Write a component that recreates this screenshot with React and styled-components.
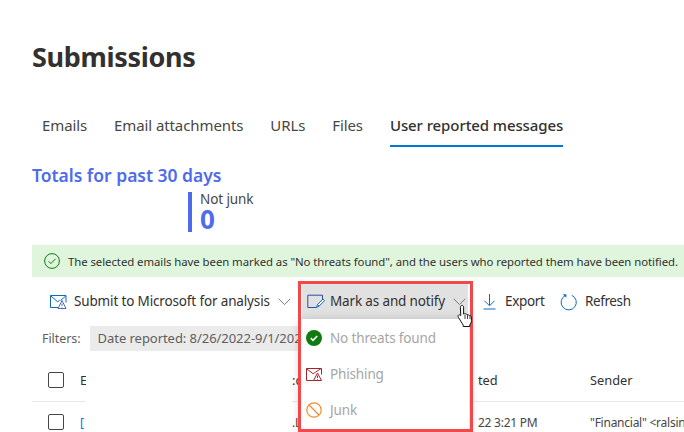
import React from "react";
import styled, { createGlobalStyle } from "styled-components";

const Global = createGlobalStyle`
  html, body { margin: 0; padding: 0; background: #fff; }
  body { width: 684px; height: 432px; overflow: hidden; font-family: "Noto Sans", "Open Sans", sans-serif; color: #323130; }
`;

const Page = styled.div`
  position: relative;
  width: 684px;
  height: 432px;
  overflow: hidden;
  padding-left: 32px;
  box-sizing: border-box;
`;
const Title = styled.h1`
  margin: 0;
  padding-top: 37px;
  height: 39px;
  font-size: 27px;
  line-height: 39px;
  font-weight: 700;
  letter-spacing: -0.33px;
  color: #323130;
`;
const Tabs = styled.nav`
  display: flex;
  gap: 27px;
  margin-top: 32px;
  padding-left: 10px;
  height: 39px;
`;
const Tab = styled.div`
  height: 39px;
  box-sizing: border-box;
  font-size: 15px;
  line-height: 35px;
  letter-spacing: -0.1px;
  white-space: nowrap;
  color: ${(p) => (p.$active ? "#323130" : "#484644")};
  font-weight: ${(p) => (p.$active ? 500 : 400)};
  border-bottom: ${(p) => (p.$active ? "2px solid #0078d4" : "2px solid transparent")};
`;
const Totals = styled.h2`
  margin: 17px 0 0;
  height: 22px;
  font-size: 17.5px;
  line-height: 22px;
  font-weight: 600;
  letter-spacing: -0.02px;
  color: #4f6bed;
`;
const Metric = styled.div`
  margin: 6px 0 0 156px;
  height: 40px;
  border-left: 4px solid #4f6bed;
  padding-left: 8px;
`;
const MetricLabel = styled.div`
  font-size: 13.5px;
  line-height: 14px;
  color: #484644;
  letter-spacing: -0.1px;
`;
const MetricValue = styled.div`
  font-size: 26px;
  line-height: 26px;
  font-weight: 700;
  color: #4f6bed;
`;
const Banner = styled.div`
  margin-top: 13px;
  height: 32px;
  background: #dff6dd;
  display: flex;
  align-items: center;
  padding-left: 12px;
  gap: 8px;
  font-size: 11.4px;
  letter-spacing: -0.07px;
  white-space: nowrap;
  color: #323130;
`;
const Toolbar = styled.div`
  display: flex;
  align-items: center;
  height: 35px;
  margin-top: 7px;
  padding-left: 18px;
  font-size: 13.5px;
`;
const ToolButton = styled.div`
  display: flex;
  align-items: center;
  height: 35px;
  flex: none;
  white-space: nowrap;
  box-sizing: border-box;
  width: ${(p) => p.$w}px;
  margin-left: ${(p) => p.$ml || 0}px;
  gap: ${(p) => p.$gap || 8}px;
  padding-left: ${(p) => p.$pl || 0}px;
  letter-spacing: ${(p) => p.$ls || "-0.15px"};
  background: ${(p) => (p.$on ? "#e1e1e1" : "transparent")};
`;
const ToolLabel = styled.span`
  margin-top: -2px;
`;
const Chevron = styled.svg`
  flex: none;
`;
const FilterRow = styled.div`
  display: flex;
  align-items: center;
  height: 25px;
  margin-top: 7px;
  padding-left: 10px;
  gap: 9px;
  font-size: 12.5px;
  letter-spacing: -0.05px;
  color: #605e5c;
`;
const Chip = styled.div`
  height: 25px;
  width: 208px;
  flex: none;
  background: #ebebeb;
  padding-left: 8px;
  box-sizing: border-box;
  line-height: 24px;
  font-size: 13px;
  white-space: nowrap;
  overflow: hidden;
`;
const Row = styled.div`
  display: grid;
  grid-template-columns: 32px 212px 186px 112px 1fr;
  align-items: center;
  height: ${(p) => p.$h}px;
  box-sizing: border-box;
  padding: ${(p) => p.$pt || 0}px 0 0 16px;
  font-size: ${(p) => (p.$head ? "12.8px" : "12px")};
  letter-spacing: ${(p) => (p.$head ? "0" : "-0.25px")};
  white-space: nowrap;
  overflow: hidden;
  border-bottom: ${(p) => (p.$line ? "1px solid #e8e8e8" : "none")};
  color: ${(p) => (p.$head ? "#323130" : "#484644")};
  font-weight: 400;
`;
const Check = styled.div`
  width: 14px;
  height: 14px;
  border: 1px solid #484644;
  border-radius: 2px;
`;
const LinkCell = styled.span`
  color: #0078d4;
`;
const Mask = styled.div`
  position: absolute;
  left: 86px;
  top: 352px;
  width: 206px;
  height: 80px;
  background: #fff;
`;
const Menu = styled.div`
  position: absolute;
  left: 301px;
  top: 319px;
  width: 168px;
  height: 113px;
  background: #fff;
  box-shadow: 0 2px 10px rgba(0, 0, 0, 0.22);
  padding-top: 1px;
  box-sizing: border-box;
`;
const MenuItem = styled.div`
  display: flex;
  align-items: center;
  height: 36px;
  padding-left: 5px;
  gap: 8px;
  font-size: 13.5px;
  letter-spacing: -0.15px;
  color: #a6a6a6;
`;
const Highlight = styled.div`
  position: absolute;
  left: 298px;
  top: 281px;
  width: 175px;
  height: 151px;
  box-sizing: border-box;
  border: 3px solid #f44749;
  pointer-events: none;
`;
const Cursor = styled.svg`
  position: absolute;
  left: 457px;
  top: 304px;
`;

const ChevronIcon = () => (
  <Chevron width="13" height="8" viewBox="0 0 13 8" fill="none">
    <path d="M.7.8l5.8 5.8L12.3.8" stroke="#7a7876" strokeWidth="1" />
  </Chevron>
);

const Mail = () => (
  <svg width="17" height="14" viewBox="0 0 17 14" fill="none" style={{ flex: "none", marginRight: "-1px" }}>
    <path d="M9 12.5H.5V.5h15.5v7" stroke="#0f6cbd" />
    <path d="M.7.8l7 6 2-1.6" stroke="#0f6cbd" />
    <path d="M16 .8L10.5 5.5" stroke="#0f6cbd" />
    <path d="M12 5.5l-4 8h8z" stroke="#4a6fb5" fill="#fff" />
    <path d="M12 8.5v2.5M12 12v.6" stroke="#4a6fb5" />
  </svg>
);
const Note = () => (
  <svg width="18" height="16" viewBox="0 0 18 16" fill="none" style={{ flex: "none", marginRight: "-3px" }}>
    <path d="M9.5 13.5H.8V1.2h14.7V5" stroke="#2b4f9e" />
    <path d="M9.5 13.5l1-3 5.5-5.5 1.6 1.6-5.5 5.5z" stroke="#0f6cbd" fill="#fff" />
    <path d="M10.5 10.5l1.6 1.6" stroke="#0f6cbd" />
  </svg>
);
const Down = () => (
  <svg width="13" height="16" viewBox="0 0 13 16" fill="none" style={{ flex: "none" }}>
    <path d="M6.5 0v11.5M1.5 6.8l5 5 5-5" stroke="#0f6cbd" />
    <path d="M0.5 15h12" stroke="#0f6cbd" />
  </svg>
);
const Refresh = () => (
  <svg width="18" height="18" viewBox="0 0 18 18" fill="none" style={{ flex: "none" }}>
    <path d="M11.7 2.3a7.6 7.6 0 1 1-6.4.2" stroke="#0f6cbd" strokeWidth="1" />
    <path d="M2.8 1.2h3.6v3.6z" fill="#0f6cbd" />
  </svg>
);
const OkRing = () => (
  <svg width="16" height="16" viewBox="0 0 16 16" fill="none" style={{ flex: "none" }}>
    <circle cx="8" cy="8" r="7.4" stroke="#107c10" />
    <path d="M4.6 8.3l2.3 2.3 4.6-4.8" stroke="#107c10" />
  </svg>
);
const OkFilled = () => (
  <svg width="16" height="16" viewBox="0 0 16 16" style={{ flex: "none" }}>
    <circle cx="8" cy="8" r="8" fill="#107c10" />
    <path d="M4.8 8.2l2.2 2.1 4.2-4.3" fill="none" stroke="#fff" strokeWidth="1.6" />
  </svg>
);
const Phish = () => (
  <svg width="16" height="13" viewBox="0 0 16 13" fill="none" style={{ flex: "none" }}>
    <path d="M8 12.5H.5V.5h15v6" stroke="#a4262c" />
    <path d="M.7.8l6.5 5 2-1.5 6-3.8" stroke="#a4262c" />
    <path d="M11.5 5l-4 7.5h8z" stroke="#a4262c" fill="#fff" />
    <path d="M11.5 7.5v2.5M11.5 11v.6" stroke="#a4262c" />
  </svg>
);
const Ban = () => (
  <svg width="16" height="16" viewBox="0 0 16 16" fill="none" style={{ flex: "none" }}>
    <circle cx="8" cy="8" r="7.2" stroke="#f7892f" strokeWidth="1.2" />
    <path d="M3 3l10 10" stroke="#f7892f" strokeWidth="1.2" />
  </svg>
);

export default function App() {
  return (
    <Page>
      <Global />
      <Title>Submissions</Title>
      <Tabs>
        <Tab>Emails</Tab>
        <Tab>Email attachments</Tab>
        <Tab>URLs</Tab>
        <Tab>Files</Tab>
        <Tab $active>User reported messages</Tab>
      </Tabs>
      <Totals>Totals for past 30 days</Totals>
      <Metric>
        <MetricLabel>Not junk</MetricLabel>
        <MetricValue>0</MetricValue>
      </Metric>
      <Banner>
        <OkRing />
        <span>The selected emails have been marked as "No threats found", and the users who reported them have been notified.</span>
      </Banner>
      <Toolbar>
        <ToolButton $w={252}>
          <Mail />
          <ToolLabel>Submit to Microsoft for analysis</ToolLabel>
          <ChevronIcon />
        </ToolButton>
        <ToolButton $on $w={166} $pl={5}>
          <Note />
          <ToolLabel>Mark as and notify</ToolLabel>
          <ChevronIcon />
        </ToolButton>
        <ToolButton $w={77} $ml={15} $gap={9} $ls="-0.35px">
          <Down />
          <ToolLabel>Export</ToolLabel>
        </ToolButton>
        <ToolButton $w={80} $gap={7} $ls="-0.4px">
          <Refresh />
          <ToolLabel>Refresh</ToolLabel>
        </ToolButton>
      </Toolbar>
      <FilterRow>
        <span>Filters:</span>
        <Chip>Date reported: 8/26/2022-9/1/2022</Chip>
      </FilterRow>
      <Row $head $line $h={51} $pt={7}>
        <Check />
        <span>E</span>
        <span>:c</span>
        <span>ted</span>
        <span>Sender</span>
      </Row>
      <Row $h={40}>
        <Check />
        <LinkCell>[</LinkCell>
        <span>.L</span>
        <span>22 3:21 PM</span>
        <span>"Financial" &lt;ralsin</span>
      </Row>
      <Mask />
      <Menu>
        <MenuItem><OkFilled />No threats found</MenuItem>
        <MenuItem><Phish />Phishing</MenuItem>
        <MenuItem><Ban />Junk</MenuItem>
      </Menu>
      <Highlight />
      <Cursor width="18" height="24" viewBox="0 0 18 24">
        <path d="M5 1.5c1 0 1.6.7 1.6 1.6v7l1-.3c.8-.2 1.4.2 1.6.6.7-.3 1.5 0 1.7.6.7-.3 1.6 0 1.8.8.8-.2 1.7.3 1.7 1.3v3.6c0 1.8-.8 3-1.6 4.2v1.6H6.2v-1.4L1.4 13.3c-.6-.8-.5-1.8.2-2.2.7-.5 1.5-.2 2.2.5l-.4-8.4C3.4 2.2 4 1.5 5 1.5z" fill="#fff" stroke="#111" strokeWidth="1" />
        <path d="M8 11v4M10.5 11v4M13 12v3" stroke="#111" strokeWidth=".8" />
      </Cursor>
    </Page>
  );
}
